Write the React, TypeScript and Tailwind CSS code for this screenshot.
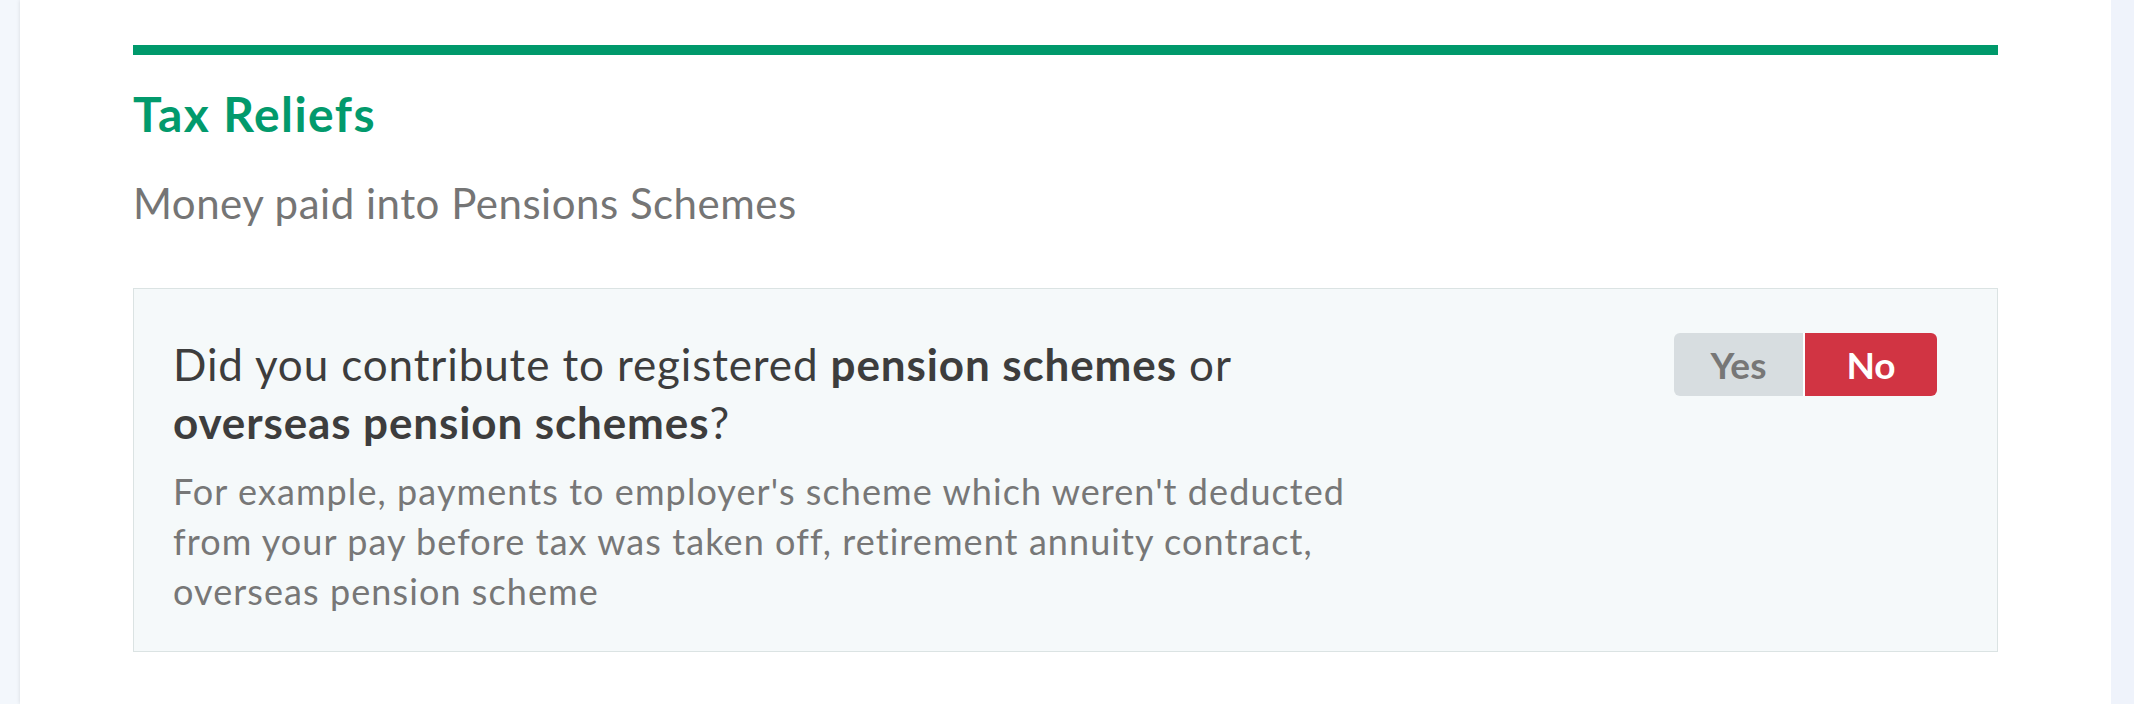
const App = () => {
  return (
    <div className="flex h-[704px] w-full overflow-hidden bg-[#f2f6fb] font-['Lato',sans-serif]">
      {/* left rail */}
      <div className="w-[20px] shrink-0 bg-[#f3f7fc]" />

      {/* main sheet */}
      <div className="flex-1 bg-white px-[113px] shadow-[0_0_4px_rgba(0,0,0,0.12)]">
        <div className="mt-[45px] h-[10px] bg-[#00996b]" />

        <h2 className="mt-[30px] text-[48px] leading-[58px] font-bold tracking-[0.03em] text-[#029a6c]">
          Tax Reliefs
        </h2>
        <p className="mt-[35px] text-[42px] leading-[50px] tracking-[0.012em] text-[#757575]">
          Money paid into Pensions Schemes
        </p>

        {/* question card */}
        <div className="mt-[60px] flex justify-between border border-[#dbe3e3] bg-[#f5f9fa] pt-[46px] pr-[60px] pb-[35px] pl-[39px]">
          <div className="max-w-[1200px]">
            <p className="text-[44px] leading-[58px] tracking-[0.02em] text-[#3d3d3d]">
              Did you contribute to registered <span className="font-bold">pension schemes</span> or{" "}
              <span className="font-bold">overseas pension schemes</span>?
            </p>
            <p className="mt-[15px] text-[36px] leading-[50px] tracking-[0.03em] text-[#777777]">
              For example, payments to employer's scheme which weren't deducted from your pay
              before tax was taken off, retirement annuity contract, overseas pension scheme
            </p>
          </div>

          <div className="-mt-[2px] flex h-[63px] shrink-0 overflow-hidden rounded-[6px] text-[37px] font-bold">
            <button className="w-[131px] border-r-2 border-white bg-[#d7dde0] text-[#777777]">Yes</button>
            <button className="w-[132px] bg-[#d13443] text-white">No</button>
          </div>
        </div>
      </div>

      {/* right rail */}
      <div className="w-[23px] shrink-0 bg-[#eff3fb]" />
    </div>
  );
};

export default App;
